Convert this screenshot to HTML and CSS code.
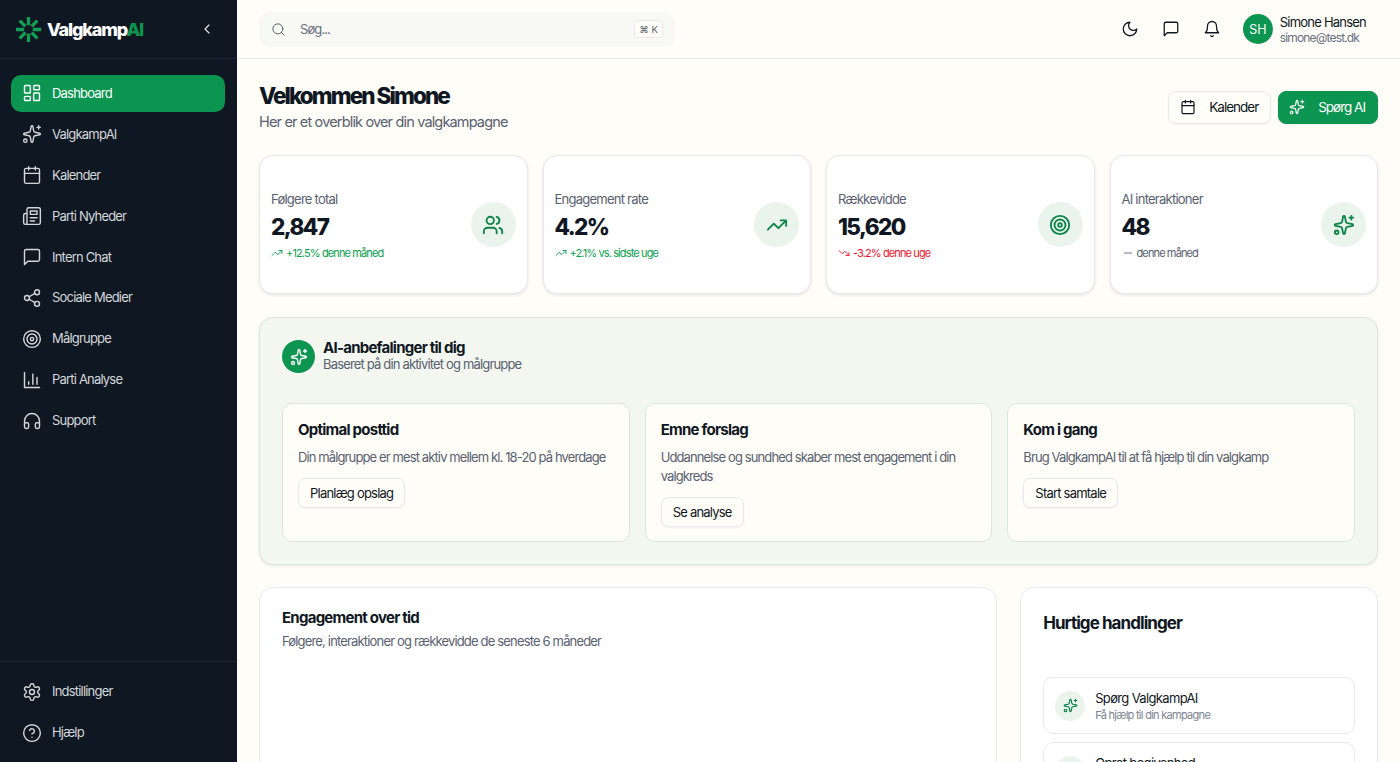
FILE: index.html
```html
<!DOCTYPE html>
<html lang="da">
<head>
<meta charset="utf-8">
<title>ValgkampAI</title>
<link rel="stylesheet" href="styles.css">
</head>
<body>
<svg class="defs" width="0" height="0" aria-hidden="true">
  <symbol id="i-spark" viewBox="0 0 24 24"><path d="M11.017 2.814a1 1 0 0 1 1.966 0l1.051 5.558a2 2 0 0 0 1.594 1.594l5.558 1.051a1 1 0 0 1 0 1.966l-5.558 1.051a2 2 0 0 0-1.594 1.594l-1.051 5.558a1 1 0 0 1-1.966 0l-1.051-5.558a2 2 0 0 0-1.594-1.594l-5.558-1.051a1 1 0 0 1 0-1.966l5.558-1.051a2 2 0 0 0 1.594-1.594z"/><path d="M20 2v4M22 4h-4"/><circle cx="4" cy="20" r="2"/></symbol>
  <symbol id="i-dash" viewBox="0 0 24 24"><rect x="3" y="3" width="7" height="9" rx="1"/><rect x="14" y="3" width="7" height="5" rx="1"/><rect x="14" y="12" width="7" height="9" rx="1"/><rect x="3" y="16" width="7" height="5" rx="1"/></symbol>
  <symbol id="i-cal" viewBox="0 0 24 24"><path d="M8 2v4M16 2v4M3 10h18"/><rect x="3" y="4" width="18" height="18" rx="2"/></symbol>
  <symbol id="i-news" viewBox="0 0 24 24"><path d="M4 22h16a2 2 0 0 0 2-2V4a2 2 0 0 0-2-2H8a2 2 0 0 0-2 2v16a2 2 0 0 1-2 2Zm0 0a2 2 0 0 1-2-2v-9c0-1.1.9-2 2-2h2"/><path d="M18 14h-8M15 18h-5M10 6h8v4h-8V6Z"/></symbol>
  <symbol id="i-chat" viewBox="0 0 24 24"><path d="M21 15a2 2 0 0 1-2 2H7l-4 4V5a2 2 0 0 1 2-2h14a2 2 0 0 1 2 2z"/></symbol>
  <symbol id="i-share" viewBox="0 0 24 24"><circle cx="18" cy="5" r="3"/><circle cx="6" cy="12" r="3"/><circle cx="18" cy="19" r="3"/><path d="M8.59 13.51l6.83 3.98M15.41 6.51l-6.82 3.98"/></symbol>
  <symbol id="i-target" viewBox="0 0 24 24"><circle cx="12" cy="12" r="10"/><circle cx="12" cy="12" r="6"/><circle cx="12" cy="12" r="2"/></symbol>
  <symbol id="i-bars" viewBox="0 0 24 24"><path d="M3 3v18h18M18 17V9M13 17V5M8 17v-3"/></symbol>
  <symbol id="i-head" viewBox="0 0 24 24"><path d="M3 14h3a2 2 0 0 1 2 2v3a2 2 0 0 1-2 2H5a2 2 0 0 1-2-2v-7a9 9 0 0 1 18 0v7a2 2 0 0 1-2 2h-1a2 2 0 0 1-2-2v-3a2 2 0 0 1 2-2h3"/></symbol>
  <symbol id="i-gear" viewBox="0 0 24 24"><path d="M12.22 2h-.44a2 2 0 0 0-2 2v.18a2 2 0 0 1-1 1.73l-.43.25a2 2 0 0 1-2 0l-.15-.08a2 2 0 0 0-2.73.73l-.22.38a2 2 0 0 0 .73 2.73l.15.1a2 2 0 0 1 1 1.72v.51a2 2 0 0 1-1 1.74l-.15.09a2 2 0 0 0-.73 2.73l.22.38a2 2 0 0 0 2.73.73l.15-.08a2 2 0 0 1 2 0l.43.25a2 2 0 0 1 1 1.73V20a2 2 0 0 0 2 2h.44a2 2 0 0 0 2-2v-.18a2 2 0 0 1 1-1.73l.43-.25a2 2 0 0 1 2 0l.15.08a2 2 0 0 0 2.73-.73l.22-.39a2 2 0 0 0-.73-2.73l-.15-.08a2 2 0 0 1-1-1.74v-.5a2 2 0 0 1 1-1.74l.15-.09a2 2 0 0 0 .73-2.73l-.22-.38a2 2 0 0 0-2.73-.73l-.15.08a2 2 0 0 1-2 0l-.43-.25a2 2 0 0 1-1-1.73V4a2 2 0 0 0-2-2z"/><circle cx="12" cy="12" r="3"/></symbol>
  <symbol id="i-help" viewBox="0 0 24 24"><circle cx="12" cy="12" r="10"/><path d="M9.09 9a3 3 0 0 1 5.83 1c0 2-3 3-3 3M12 17h.01"/></symbol>
  <symbol id="i-moon" viewBox="0 0 24 24"><path d="M12 3a6 6 0 0 0 9 9 9 9 0 1 1-9-9Z"/></symbol>
  <symbol id="i-bell" viewBox="0 0 24 24"><path d="M6 8a6 6 0 0 1 12 0c0 7 3 9 3 9H3s3-2 3-9M10.3 21a1.94 1.94 0 0 0 3.4 0"/></symbol>
  <symbol id="i-search" viewBox="0 0 24 24"><circle cx="11" cy="11" r="8"/><path d="m21 21-4.3-4.3"/></symbol>
  <symbol id="i-users" viewBox="0 0 24 24"><path d="M16 21v-2a4 4 0 0 0-4-4H6a4 4 0 0 0-4 4v2"/><circle cx="9" cy="7" r="4"/><path d="M22 21v-2a4 4 0 0 0-3-3.87M16 3.13a4 4 0 0 1 0 7.75"/></symbol>
  <symbol id="i-up" viewBox="0 0 24 24"><path d="M22 7l-8.5 8.5-5-5L2 17M16 7h6v6"/></symbol>
  <symbol id="i-down" viewBox="0 0 24 24"><path d="M22 17l-8.5-8.5-5 5L2 7M16 17h6v-6"/></symbol>
  <symbol id="i-minus" viewBox="0 0 24 24"><path d="M5 12h14"/></symbol>
  <symbol id="i-left" viewBox="0 0 24 24"><path d="m15 18-6-6 6-6"/></symbol>
</svg>

<div class="app">
  <aside class="sidebar">
    <div class="brand">
      <svg class="logo" viewBox="0 0 28 28"><path d="M14 1v8.500M14 18.500V27M1 14h8.500M18.500 14H27M4.800 4.800l6 6M17.200 17.200l6 6M23.200 4.800l-6 6M10.800 17.200l-6 6"/></svg>
      <span class="brand-name">Valgkamp<span class="brand-ai">AI</span></span>
      <svg class="icon collapse"><use href="#i-left"/></svg>
    </div>
    <nav class="nav">
      <a class="nav-item active"><svg class="icon"><use href="#i-dash"/></svg>Dashboard</a>
      <a class="nav-item"><svg class="icon"><use href="#i-spark"/></svg>ValgkampAI</a>
      <a class="nav-item"><svg class="icon"><use href="#i-cal"/></svg>Kalender</a>
      <a class="nav-item"><svg class="icon"><use href="#i-news"/></svg>Parti Nyheder</a>
      <a class="nav-item"><svg class="icon"><use href="#i-chat"/></svg>Intern Chat</a>
      <a class="nav-item"><svg class="icon"><use href="#i-share"/></svg>Sociale Medier</a>
      <a class="nav-item"><svg class="icon"><use href="#i-target"/></svg>Målgruppe</a>
      <a class="nav-item"><svg class="icon"><use href="#i-bars"/></svg>Parti Analyse</a>
      <a class="nav-item"><svg class="icon"><use href="#i-head"/></svg>Support</a>
    </nav>
    <nav class="nav nav-foot">
      <a class="nav-item"><svg class="icon"><use href="#i-gear"/></svg>Indstillinger</a>
      <a class="nav-item"><svg class="icon"><use href="#i-help"/></svg>Hjælp</a>
    </nav>
  </aside>

  <div class="main">
    <header class="topbar">
      <div class="search">
        <svg class="icon search-icon"><use href="#i-search"/></svg>
        <span class="search-text">Søg...</span>
        <kbd class="kbd">⌘ K</kbd>
      </div>
      <div class="top-actions">
        <svg class="icon"><use href="#i-moon"/></svg>
        <svg class="icon"><use href="#i-chat"/></svg>
        <svg class="icon"><use href="#i-bell"/></svg>
      </div>
      <div class="user">
        <div class="avatar">SH</div>
        <div class="user-text">
          <div class="user-name">Simone Hansen</div>
          <div class="user-mail">simone@test.dk</div>
        </div>
      </div>
    </header>

    <main class="content">
      <section class="welcome">
        <div>
          <h1 class="title">Velkommen Simone</h1>
          <p class="subtitle">Her er et overblik over din valgkampagne</p>
        </div>
        <div class="welcome-actions">
          <button class="btn"><svg class="icon"><use href="#i-cal"/></svg>Kalender</button>
          <button class="btn btn-primary"><svg class="icon"><use href="#i-spark"/></svg>Spørg AI</button>
        </div>
      </section>

      <section class="stats">
        <article class="stat">
          <div class="stat-body">
            <div class="stat-label">Følgere total</div>
            <div class="stat-value">2,847</div>
            <div class="stat-note up"><svg class="icon"><use href="#i-up"/></svg>+12.5% denne måned</div>
          </div>
          <div class="stat-icon"><svg class="icon"><use href="#i-users"/></svg></div>
        </article>
        <article class="stat">
          <div class="stat-body">
            <div class="stat-label">Engagement rate</div>
            <div class="stat-value">4.2%</div>
            <div class="stat-note up"><svg class="icon"><use href="#i-up"/></svg>+2.1% vs. sidste uge</div>
          </div>
          <div class="stat-icon"><svg class="icon"><use href="#i-up"/></svg></div>
        </article>
        <article class="stat">
          <div class="stat-body">
            <div class="stat-label">Rækkevidde</div>
            <div class="stat-value">15,620</div>
            <div class="stat-note down"><svg class="icon"><use href="#i-down"/></svg>-3.2% denne uge</div>
          </div>
          <div class="stat-icon"><svg class="icon"><use href="#i-target"/></svg></div>
        </article>
        <article class="stat">
          <div class="stat-body">
            <div class="stat-label">AI interaktioner</div>
            <div class="stat-value">48</div>
            <div class="stat-note flat"><svg class="icon"><use href="#i-minus"/></svg>denne måned</div>
          </div>
          <div class="stat-icon"><svg class="icon"><use href="#i-spark"/></svg></div>
        </article>
      </section>

      <section class="ai-panel">
        <div class="ai-head">
          <div class="ai-badge"><svg class="icon"><use href="#i-spark"/></svg></div>
          <div>
            <h2 class="ai-title">AI-anbefalinger til dig</h2>
            <p class="ai-sub">Baseret på din aktivitet og målgruppe</p>
          </div>
        </div>
        <div class="ai-grid">
          <article class="ai-card">
            <h3 class="ai-card-title">Optimal posttid</h3>
            <p class="ai-card-text">Din målgruppe er mest aktiv mellem kl. 18-20 på hverdage</p>
            <button class="btn-small">Planlæg opslag</button>
          </article>
          <article class="ai-card">
            <h3 class="ai-card-title">Emne forslag</h3>
            <p class="ai-card-text">Uddannelse og sundhed skaber mest engagement i din valgkreds</p>
            <button class="btn-small">Se analyse</button>
          </article>
          <article class="ai-card">
            <h3 class="ai-card-title">Kom i gang</h3>
            <p class="ai-card-text">Brug ValgkampAI til at få hjælp til din valgkamp</p>
            <button class="btn-small">Start samtale</button>
          </article>
        </div>
      </section>

      <section class="bottom">
        <article class="panel chart-panel">
          <h2 class="panel-title">Engagement over tid</h2>
          <p class="panel-sub">Følgere, interaktioner og rækkevidde de seneste 6 måneder</p>
        </article>
        <article class="panel quick-panel">
          <h2 class="quick-title">Hurtige handlinger</h2>
          <div class="quick-list">
            <div class="quick-item">
              <div class="quick-icon"><svg class="icon"><use href="#i-spark"/></svg></div>
              <div>
                <div class="quick-name">Spørg ValgkampAI</div>
                <div class="quick-sub">Få hjælp til din kampagne</div>
              </div>
            </div>
            <div class="quick-item">
              <div class="quick-icon"><svg class="icon"><use href="#i-cal"/></svg></div>
              <div>
                <div class="quick-name">Opret begivenhed</div>
                <div class="quick-sub">Tilføj til din kalender</div>
              </div>
            </div>
          </div>
        </article>
      </section>
    </main>
  </div>
</div>
</body>
</html>
```

FILE: styles.css
```css
* { box-sizing: border-box; }
html, body { margin: 0; height: 100%; overflow: hidden; }
body {
  font-family: "Inter", "Liberation Sans", sans-serif;
  color: #0f1722;
  background: #fffdf8;
}
h1, h2, h3, p { margin: 0; }
.defs { position: absolute; }

.icon {
  width: 18px;
  height: 18px;
  flex: none;
  fill: none;
  stroke: currentColor;
  stroke-width: 2;
  stroke-linecap: round;
  stroke-linejoin: round;
}

.app { display: flex; height: 762px; }

/* Sidebar */
.sidebar {
  width: 237px;
  flex: none;
  display: flex;
  flex-direction: column;
  background: #0f1722;
  color: #d3d6da;
}
.brand {
  height: 59px;
  flex: none;
  display: flex;
  align-items: center;
  padding: 0 22px 0 15px;
  border-bottom: 1px solid #1f2936;
}
.logo {
  width: 27px;
  height: 27px;
  flex: none;
  fill: none;
  stroke: #0fa055;
  stroke-width: 3.4;
}
.brand-name {
  margin-left: 5px;
  flex: 1;
  font-size: 18px;
  font-weight: 800;
  letter-spacing: -0.065em;
  color: #fff;
}
.brand-ai { color: #0b9550; }
.collapse { width: 16px; height: 16px; color: #e8e9eb; stroke-width: 1.7; }
.nav {
  display: flex;
  flex-direction: column;
  gap: 4px;
  padding: 16px 12px 0 11px;
  flex: 1;
}
.nav-item {
  height: 36.9px;
  display: flex;
  align-items: center;
  gap: 10px;
  padding: 0 11px;
  border-radius: 10px;
  font-size: 13px;
  letter-spacing: -0.062em;
  line-height: 1;
}
.nav-item .icon { width: 20px; height: 20px; stroke-width: 1.7; }
.nav-item.active { background: #0b9550; color: #fff; }
.nav-foot {
  flex: none;
  padding-top: 11px;
  padding-bottom: 11px;
  border-top: 1px solid #1f2936;
}

/* Main */
.main {
  flex: 1;
  min-width: 0;
  display: flex;
  flex-direction: column;
}
.topbar {
  height: 59px;
  flex: none;
  display: flex;
  align-items: center;
  padding: 0 22px;
  border-bottom: 1px solid #e9e9ed;
}
.search {
  width: 416px;
  height: 35px;
  display: flex;
  align-items: center;
  padding: 0 12px;
  background: #f8f8f4;
  border-radius: 10px;
  color: #687080;
}
.search-icon { width: 15px; height: 15px; stroke-width: 1.5; color: #4f5766; }
.search-text { flex: 1; margin-left: 14px; font-size: 13px; letter-spacing: -0.07em; }
.kbd {
  height: 18px;
  padding: 0 4px;
  display: flex;
  align-items: center;
  font-family: "Inter", "DejaVu Sans", sans-serif;
  font-size: 9.5px;
  letter-spacing: 0.01em;
  color: #596170;
  background: #fffdf8;
  border: 1px solid #e9e9ed;
  border-radius: 4px;
}
.top-actions {
  margin-left: auto;
  display: flex;
  align-items: center;
  gap: 23px;
  color: #0f1722;
}
.top-actions .icon { width: 18px; height: 18px; stroke-width: 1.7; }
.user { display: flex; align-items: center; gap: 7px; margin-left: 22px; padding-right: 12px; }
.avatar {
  width: 30px;
  height: 30px;
  border-radius: 50%;
  background: #0b9550;
  color: #fff;
  font-size: 12.5px;
  display: flex;
  align-items: center;
  justify-content: center;
}
.user-text { padding-top: 2px; }
.user-name { font-size: 13px; line-height: 16px; letter-spacing: -0.06em; }
.user-mail { font-size: 12px; line-height: 16px; letter-spacing: -0.07em; color: #687080; }

.content {
  flex: 1;
  min-height: 0;
  padding: 0 22px;
  overflow: hidden;
}

/* Welcome */
.welcome {
  height: 96px;
  display: flex;
  align-items: center;
  justify-content: space-between;
}
.title { font-size: 22.5px; line-height: 26px; font-weight: 800; letter-spacing: -0.086em; }
.subtitle { margin-top: 3px; font-size: 14.5px; line-height: 20px; letter-spacing: -0.058em; color: #596170; }
.welcome-actions { display: flex; gap: 7px; }
.btn {
  height: 33px;
  display: flex;
  align-items: center;
  gap: 13px;
  padding: 0 12px 0 11px;
  font: inherit;
  font-size: 13.5px;
  letter-spacing: -0.075em;
  color: #0f1722;
  background: #fffdf8;
  border: 1px solid #e9e9ed;
  border-radius: 8px;
  box-shadow: 0 1px 2px rgba(15, 23, 34, 0.05);
}
.btn .icon { width: 16px; height: 16px; stroke-width: 1.8; }
.btn-primary { padding-left: 10px; background: #0b9550; border-color: #0b9550; color: #fff; }

/* Stats */
.stats {
  display: grid;
  grid-template-columns: repeat(4, 1fr);
  gap: 15px;
}
.stat {
  height: 139px;
  display: flex;
  align-items: center;
  justify-content: space-between;
  padding: 0 11px;
  background: #fff;
  border: 1px solid #e9e9ed;
  border-radius: 14px;
  box-shadow: 0 1px 3px rgba(15, 23, 34, 0.12);
}
.stat-body { padding-top: 3px; }
.stat-label { font-size: 13px; line-height: 16px; letter-spacing: -0.058em; color: #596170; }
.stat-value { margin-top: 6px; font-size: 22.5px; line-height: 28px; font-weight: 800; letter-spacing: -0.07em; }
.stat-note {
  margin-top: 4px;
  display: flex;
  align-items: center;
  gap: 3px;
  font-size: 11px;
  line-height: 16px;
  letter-spacing: -0.08em;
}
.stat-note .icon { width: 12px; height: 12px; stroke-width: 1.8; }
.up { color: #0a9f4e; }
.down { color: #f0132b; }
.flat { color: #596170; }
.stat-icon {
  width: 45px;
  height: 45px;
  flex: none;
  border-radius: 50%;
  background: #eaf3ec;
  color: #0b8548;
  display: flex;
  align-items: center;
  justify-content: center;
}
.stat-icon .icon { width: 22px; height: 22px; stroke-width: 2; }

/* AI panel */
.ai-panel {
  margin-top: 23px;
  height: 248px;
  padding: 22px;
  background: #f3f7f0;
  border: 1px solid #d8e8dc;
  border-radius: 14px;
  box-shadow: 0 1px 3px rgba(15, 23, 34, 0.1);
}
.ai-head { display: flex; align-items: center; gap: 8px; height: 33px; }
.ai-badge {
  width: 33px;
  height: 33px;
  border-radius: 50%;
  background: #0b9550;
  color: #fff;
  display: flex;
  align-items: center;
  justify-content: center;
}
.ai-badge .icon { width: 18px; height: 18px; stroke-width: 1.8; }
.ai-title { font-size: 15px; line-height: 17px; font-weight: 700; letter-spacing: -0.05em; }
.ai-sub { margin-bottom: 2px; font-size: 13px; line-height: 17px; letter-spacing: -0.064em; color: #596170; }
.ai-grid {
  margin-top: 30px;
  display: grid;
  grid-template-columns: repeat(3, 1fr);
  gap: 15px;
}
.ai-card {
  height: 138.5px;
  padding: 15px;
  background: #fffdf8;
  border: 1px solid #d8e8dc;
  border-radius: 10px;
}
.ai-card-title { font-size: 15px; line-height: 22px; font-weight: 700; letter-spacing: -0.05em; }
.ai-card-text { margin-top: 7px; font-size: 13px; line-height: 19px; letter-spacing: -0.068em; color: #596170; }
.btn-small {
  display: block;
  margin-top: 10.5px;
  height: 30px;
  padding: 0 11px;
  font: inherit;
  font-size: 13px;
  letter-spacing: -0.06em;
  color: #0f1722;
  background: #fffdf8;
  border: 1px solid #e9e9ed;
  border-radius: 7px;
  box-shadow: 0 1px 2px rgba(15, 23, 34, 0.05);
}

/* Bottom */
.bottom {
  margin-top: 22px;
  display: grid;
  grid-template-columns: 2.063fr 1fr;
  gap: 23px;
}
.panel {
  height: 300px;
  background: #fff;
  border: 1px solid #e9e9ed;
  border-radius: 14px;
}
.chart-panel { padding: 21px 22px; }
.panel-title { font-size: 15px; line-height: 18px; font-weight: 700; letter-spacing: -0.05em; }
.panel-sub { margin-top: 5px; font-size: 13px; line-height: 18px; letter-spacing: -0.064em; color: #596170; }
.quick-panel { padding: 22px; }
.quick-title { font-size: 17px; line-height: 26px; font-weight: 700; letter-spacing: -0.055em; }
.quick-list { margin-top: 41px; display: flex; flex-direction: column; gap: 8px; }
.quick-item {
  height: 57px;
  display: flex;
  align-items: center;
  gap: 10px;
  padding: 0 11px;
  border: 1px solid #e9e9ed;
  border-radius: 10px;
}
.quick-icon {
  width: 30px;
  height: 30px;
  flex: none;
  border-radius: 50%;
  background: #eaf3ec;
  color: #0b8548;
  display: flex;
  align-items: center;
  justify-content: center;
}
.quick-icon .icon { width: 15px; height: 15px; stroke-width: 1.9; }
.quick-name { margin-top: 2px; font-size: 13px; line-height: 17px; letter-spacing: -0.05em; }
.quick-sub { font-size: 11px; line-height: 16px; letter-spacing: -0.065em; color: #7d8390; }
```
